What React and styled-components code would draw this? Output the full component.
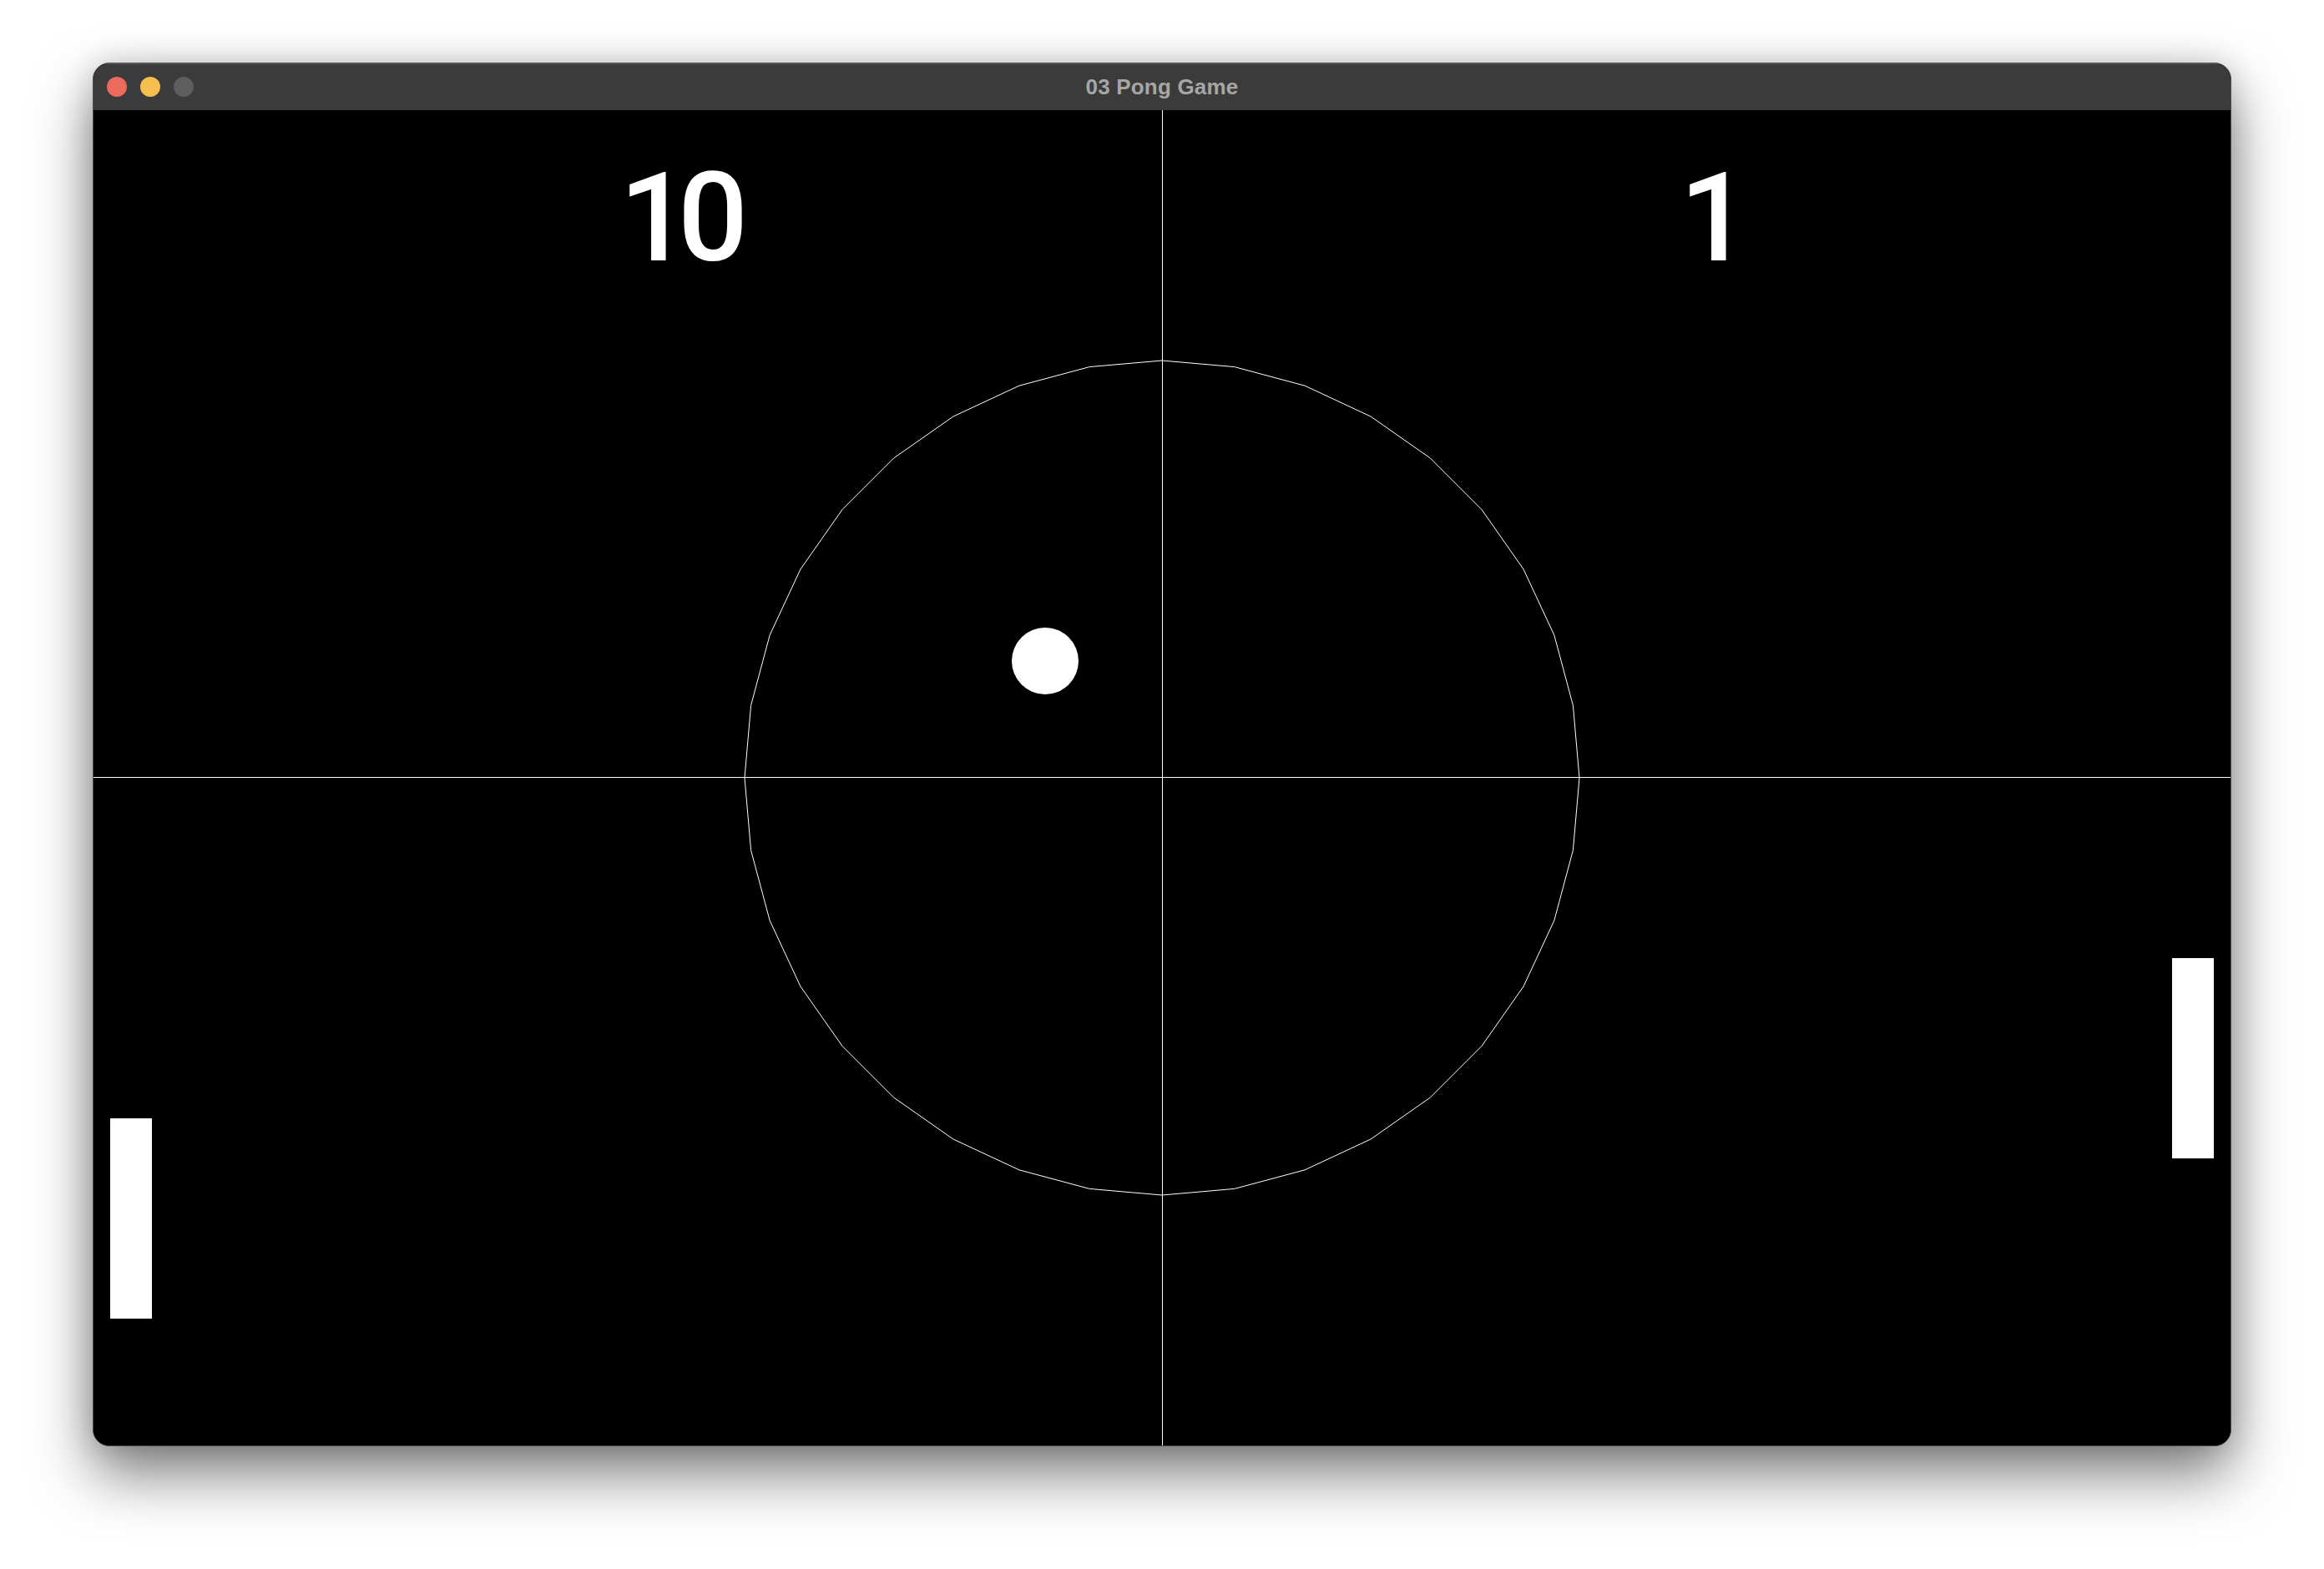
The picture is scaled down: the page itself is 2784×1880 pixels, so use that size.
import React from "react";
import styled, { createGlobalStyle } from "styled-components";

const GlobalStyle = createGlobalStyle`
  html, body {
    margin: 0;
    padding: 0;
    background: #ffffff;
  }
  body {
    font-family: "Liberation Sans", Arial, sans-serif;
  }
`;

const Desktop = styled.div`
  width: 2784px;
  height: 1880px;
  display: flex;
  justify-content: center;
  align-items: flex-start;
  padding-top: 75px;
  box-sizing: border-box;
  background: #ffffff;
  overflow: hidden;
`;

const Window = styled.div`
  width: 2560px;
  display: flex;
  flex-direction: column;
  border: 1px solid #4e4e4e;
  border-radius: 20px;
  overflow: hidden;
  background: #000;
  box-shadow: 0 34px 70px rgba(0, 0, 0, 0.5), 0 0 36px rgba(0, 0, 0, 0.16);
`;

const TitleBar = styled.div`
  height: 56px;
  position: relative;
  display: flex;
  align-items: center;
  justify-content: center;
  background: #3b3b3b;
  box-shadow: inset 0 1px 0 #5c5c5c;
`;

const Lights = styled.div`
  position: absolute;
  left: 16px;
  top: 0;
  bottom: 0;
  display: flex;
  align-items: center;
  gap: 16px;
`;

const Light = styled.span`
  width: 24px;
  height: 24px;
  border-radius: 50%;
  background: ${(p) => p.color};
`;

const Title = styled.div`
  font-family: "Liberation Sans", Arial, sans-serif;
  font-weight: 700;
  font-size: 26px;
  color: #a6a6a6;
  letter-spacing: 0.2px;
`;

const Field = styled.div`
  position: relative;
  width: 2560px;
  height: 1600px;
  background: #000;
`;

const Court = styled.svg`
  position: absolute;
  left: 0;
  top: 0;
  display: block;
`;

const Score = styled.div`
  position: absolute;
  top: 56px;
  left: ${(p) => p.x}px;
  font-family: Roboto, "Liberation Sans", sans-serif;
  font-weight: 500;
  font-size: 148px;
  line-height: 1;
  letter-spacing: -14px;
  color: #fff;
`;

const W = 2560;
const H = 1600;
const CX = W / 2;
const CY = H / 2;
const R = 500;

const circlePoints = Array.from({ length: 36 }, (_, i) => {
  const a = (i * 10 * Math.PI) / 180;
  return `${(CX + R * Math.sin(a)).toFixed(2)},${(CY - R * Math.cos(a)).toFixed(2)}`;
}).join(" ");

const game = {
  scores: [10, 1],
  ball: { x: 1140, y: 660, r: 40 },
  paddles: [
    { x: 20, y: 1208, w: 50, h: 240 },
    { x: 2490, y: 1016, w: 50, h: 240 },
  ],
};

export default function App() {
  return (
    <>
      <GlobalStyle />
      <Desktop>
        <Window>
          <TitleBar>
            <Lights>
              <Light color="#ec6a5e" />
              <Light color="#f4bf4f" />
              <Light color="#5e5e5e" />
            </Lights>
            <Title>03 Pong Game</Title>
          </TitleBar>
          <Field>
            <Court width={W} height={H} viewBox={`0 0 ${W} ${H}`}>
              <line x1={CX + 0.5} y1={0} x2={CX + 0.5} y2={H} stroke="#fff" strokeWidth="1" />
              <line x1={0} y1={CY - 0.5} x2={W} y2={CY - 0.5} stroke="#fff" strokeWidth="1" />
              <polygon points={circlePoints} fill="none" stroke="#fff" strokeWidth="1" />
              <circle cx={game.ball.x} cy={game.ball.y} r={game.ball.r} fill="#fff" />
              {game.paddles.map((p, i) => (
                <rect key={i} x={p.x} y={p.y} width={p.w} height={p.h} fill="#fff" />
              ))}
            </Court>
            <Score x={630}>{game.scores[0]}</Score>
            <Score x={1900}>{game.scores[1]}</Score>
          </Field>
        </Window>
      </Desktop>
    </>
  );
}
